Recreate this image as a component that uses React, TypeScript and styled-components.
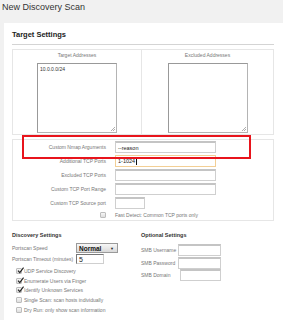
import React from 'react';
import styled, { createGlobalStyle } from 'styled-components';

const GlobalStyle = createGlobalStyle`
	html, body {
		margin: 0;
		padding: 0;
	}
	body {
		font-family: 'Liberation Sans', Arial, sans-serif;
		background: #f1f1f1;
	}
`;

const targetOptions = [
	{ label: 'Custom Nmap Arguments', value: '--reason' },
	{ label: 'Additional TCP Ports', value: '1-1024', focused: true },
	{ label: 'Excluded TCP Ports', value: '' },
	{ label: 'Custom TCP Port Range', value: '' },
	{ label: 'Custom TCP Source port', value: '', short: true },
];

const discoveryChecks = [
	{ label: 'UDP Service Discovery', checked: true },
	{ label: 'Enumerate Users via Finger', checked: true },
	{ label: 'Identify Unknown Services', checked: true },
	{ label: 'Single Scan: scan hosts individually', checked: false },
	{ label: 'Dry Run: only show scan information', checked: false },
];

const smbFields = ['SMB Username', 'SMB Password', 'SMB Domain'];

const Check: React.FC<{ checked?: boolean }> = ({ checked }) => (
	<Box>
		{checked && (
			<svg width='7' height='7' viewBox='0 0 7 7'>
				<path d='M1 3.6 L2.8 5.6 L6.6 0.6' fill='none' stroke='#222' strokeWidth='1.2' />
			</svg>
		)}
	</Box>
);

const App: React.FC = () => {
	return (
		<Page>
			<GlobalStyle />
			<Header>New Discovery Scan</Header>
			<Panel>
				<SectionTitle>Target Settings</SectionTitle>
				<AddressBox>
					<AddressCol $divider>
						<ColLabel>Target Addresses</ColLabel>
						<AddressArea defaultValue='10.0.0.0/24' />
					</AddressCol>
					<AddressCol>
						<ColLabel>Excluded Addresses</ColLabel>
						<AddressArea defaultValue='' />
					</AddressCol>
				</AddressBox>

				<OptionsBox>
					{targetOptions.map((opt) => (
						<OptionRow key={opt.label}>
							<OptionLabel>{opt.label}</OptionLabel>
							<Field $width={opt.short ? 30 : 101} $focused={opt.focused}>
								{opt.value}
								{opt.focused && <Caret />}
							</Field>
						</OptionRow>
					))}
					<OptionRow $last>
						<OptionLabel>
							<Check />
						</OptionLabel>
						<FastText>Fast Detect: Common TCP ports only</FastText>
					</OptionRow>
				</OptionsBox>

				<BottomGrid>
					<div>
						<SubTitle>Discovery Settings</SubTitle>
						<SettingRow>
							<SmallLabel>Portscan Speed</SmallLabel>
							<Select>
								<span>Normal</span>
								<Arrow>▼</Arrow>
							</Select>
						</SettingRow>
						<SettingRow $gap={1}>
							<SmallLabel>Portscan Timeout (minutes)</SmallLabel>
							<Field $width={28} $height={10} $dark>
								5
							</Field>
						</SettingRow>
						<CheckList>
							{discoveryChecks.map((c) => (
								<CheckRow key={c.label}>
									<Check checked={c.checked} />
									<SmallLabel>{c.label}</SmallLabel>
								</CheckRow>
							))}
						</CheckList>
					</div>
					<div>
						<SubTitle $space={5}>Optional Settings</SubTitle>
						{smbFields.map((name, i) => (
							<SmbRow key={name}>
								<SmallLabel>{name}</SmallLabel>
								<Field $width={i === 2 ? 41 : 43} $height={12} $indent={i === 2 ? 2 : 0} />
							</SmbRow>
						))}
					</div>
				</BottomGrid>
			</Panel>
			<Annotation />
		</Page>
	);
};

const Page = styled.div`
	position: relative;
	width: 283px;
	height: 320px;
	overflow: hidden;
	background: #f1f1f1;
`;

const Header = styled.div`
	height: 23px;
	padding-left: 2px;
	font-size: 9px;
	line-height: 14px;
	color: #333;
`;

const Panel = styled.div`
	margin-left: 4px;
	height: 297px;
	padding: 0 9px 0 8px;
	background: #fff;
`;

const SectionTitle = styled.div`
	padding: 6px 0 3px;
	font-size: 7.5px;
	font-weight: bold;
	line-height: 12px;
	color: #222;
	border-bottom: 1px solid #d4d4d4;
`;

const AddressBox = styled.div`
	margin-top: 4px;
	height: 84px;
	display: grid;
	grid-template-columns: 129px 1fr;
	border: 1px solid #e6e6e6;
`;

const AddressCol = styled.div<{ $divider?: boolean }>`
	display: flex;
	flex-direction: column;
	align-items: center;
	padding-top: 1px;
	border-right: ${({ $divider }) => ($divider ? '1px solid #e6e6e6' : 'none')};
`;

const ColLabel = styled.div`
	margin-bottom: 4px;
	font-size: 5px;
	line-height: 8px;
	color: #777;
`;

const AddressArea = styled.textarea`
	box-sizing: border-box;
	width: 80px;
	height: 70px;
	margin: 0;
	padding: 2px;
	font-family: 'Liberation Sans', Arial, sans-serif;
	font-size: 5px;
	color: #333;
	border: 1px solid #b4b4b4;
	border-top-color: #999;
	border-left-color: #999;
	outline: none;
	resize: none;
	background: linear-gradient(
			135deg,
			transparent 0 55%,
			#b0b0b0 55% 64%,
			transparent 64% 76%,
			#b0b0b0 76% 86%,
			transparent 86%
		)
		no-repeat right 1px bottom 1px / 5px 5px,
		#fff;
`;

const OptionsBox = styled.div`
	margin-top: 4px;
	border: 1px solid #e6e6e6;
`;

const OptionRow = styled.div<{ $last?: boolean }>`
	display: grid;
	grid-template-columns: 98px 1fr;
	align-items: center;
	height: ${({ $last }) => ($last ? 10 : 14)}px;
`;

const OptionLabel = styled.div`
	display: flex;
	justify-content: flex-end;
	padding-right: 5px;
	font-size: 5px;
	color: #777;
`;

const Field = styled.div<{
	$width: number;
	$height?: number;
	$focused?: boolean;
	$dark?: boolean;
	$indent?: number;
}>`
	box-sizing: border-box;
	display: flex;
	align-items: center;
	width: ${({ $width }) => $width}px;
	height: ${({ $height }) => $height ?? 12}px;
	margin-left: ${({ $indent }) => $indent ?? 0}px;
	padding: 0 2px;
	font-size: ${({ $dark }) => ($dark ? 7 : 5.5)}px;
	color: #222;
	background: #fff;
	border: 1px solid ${({ $focused }) => ($focused ? '#f3cf95' : '#cfcfcf')};
	border-top: ${({ $focused, $dark }) =>
		$focused ? '1px solid #f3cf95' : $dark ? '1px solid #777' : '2px solid #c4c4c4'};
	border-left-color: ${({ $focused, $dark }) => ($focused ? '#f3cf95' : $dark ? '#777' : '#cfcfcf')};

	${OptionRow} & {
		margin-left: 4px;
	}
`;

const Caret = styled.span`
	width: 1px;
	height: 7px;
	margin-left: 1px;
	background: #111;
`;

const FastText = styled.div`
	padding-left: 4px;
	font-size: 5px;
	color: #777;
`;

const Box = styled.span`
	box-sizing: border-box;
	position: relative;
	display: inline-flex;
	align-items: center;
	justify-content: center;
	width: 6px;
	height: 6px;
	flex: none;
	border: 1px solid #bdbdbd;
	border-radius: 1px;
	background: linear-gradient(#f6f6f6, #dedede);

	svg {
		position: absolute;
		left: 0;
		top: -2px;
	}
`;

const BottomGrid = styled.div`
	display: grid;
	grid-template-columns: 129px 1fr;
	padding-top: 10px;
`;

const SubTitle = styled.div<{ $space?: number }>`
	margin-bottom: ${({ $space }) => $space ?? 4}px;
	font-size: 5.5px;
	font-weight: bold;
	line-height: 8px;
	color: #333;
`;

const SettingRow = styled.div<{ $gap?: number }>`
	display: grid;
	grid-template-columns: 64px auto;
	align-items: center;
	height: 10px;
	margin-top: ${({ $gap }) => $gap ?? 0}px;
`;

const SmallLabel = styled.span`
	font-size: 5px;
	color: #777;
	white-space: nowrap;
`;

const Select = styled.div`
	box-sizing: border-box;
	display: flex;
	align-items: center;
	justify-content: space-between;
	width: 42px;
	height: 10px;
	padding: 0 3px 0 2px;
	font-size: 6.5px;
	font-weight: bold;
	color: #111;
	border: 1px solid #9a9a9a;
	background: linear-gradient(#f7f7f7, #d9d9d9);
`;

const Arrow = styled.span`
	font-size: 4px;
	color: #222;
`;

const CheckList = styled.div`
	margin-top: 2px;
`;

const CheckRow = styled.div`
	display: flex;
	align-items: center;
	gap: 2px;
	height: 9.75px;
	padding-left: 4px;
`;

const SmbRow = styled.div`
	display: grid;
	grid-template-columns: 37px auto;
	align-items: center;
	height: 12.5px;
`;

const Annotation = styled.div`
	position: absolute;
	left: 22px;
	top: 135px;
	box-sizing: border-box;
	width: 229px;
	height: 24px;
	border: 2px solid #e8141c;
`;

export default App;
